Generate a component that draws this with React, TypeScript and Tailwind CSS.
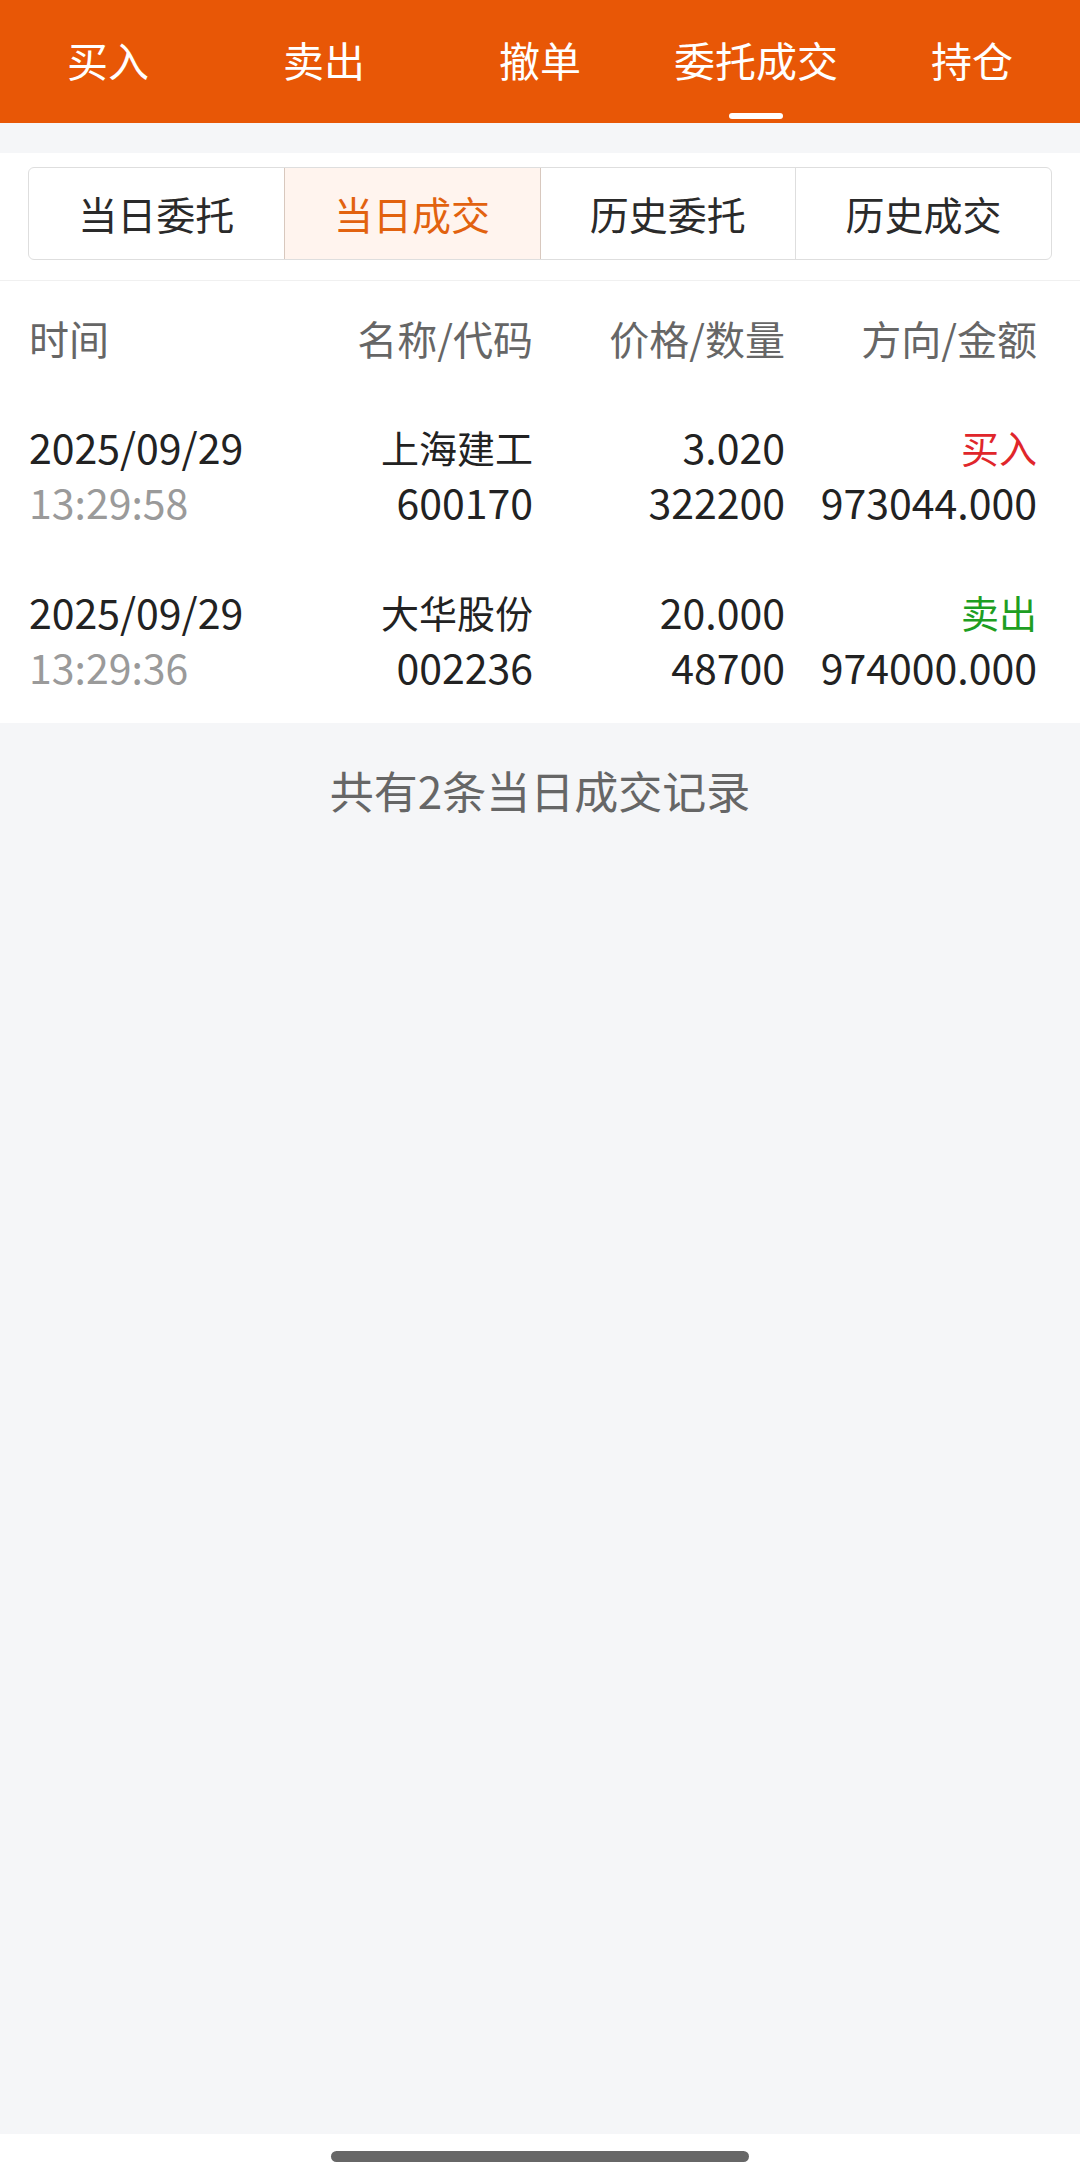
import React from "react";

const font = { fontFamily: '"Noto Sans CJK SC", "Noto Sans", sans-serif' };

const topTabs = ["买入", "卖出", "撤单", "委托成交", "持仓"];
const subTabs = ["当日委托", "当日成交", "历史委托", "历史成交"];

const rows = [
  { date: "2025/09/29", time: "13:29:58", name: "上海建工", code: "600170", price: "3.020", qty: "322200", dir: "买入", amt: "973044.000", buy: true },
  { date: "2025/09/29", time: "13:29:36", name: "大华股份", code: "002236", price: "20.000", qty: "48700", dir: "卖出", amt: "974000.000", buy: false },
];

export default function App() {
  return (
    <div className="w-[1080px] h-[2179px] flex flex-col bg-[#f5f6f8]" style={font}>
      {/* top nav */}
      <div className="h-[123px] bg-[#e85706] flex shrink-0">
        {topTabs.map((t, i) => (
          <div key={t} className="flex-1 relative flex items-center justify-center pb-[4px]">
            <span className="text-white text-[41px] leading-none">{t}</span>
            {i === 3 && (
              <div className="absolute left-1/2 -translate-x-1/2 top-[113px] w-[54px] h-[6px] rounded-full bg-white" />
            )}
          </div>
        ))}
      </div>
      <div className="h-[30px] shrink-0 bg-[#f5f6f8]" />
      {/* sub tabs */}
      <div className="bg-white pt-[14px] pb-[20px] px-[28px] shrink-0 border-b border-[#f0f0f0]">
        <div className="h-[93px] flex border border-[#dedede] rounded-[6px] overflow-hidden">
          {subTabs.map((t, i) => (
            <div
              key={t}
              className={
                i === 1
                  ? "flex-1 flex items-center justify-center bg-[#fff4ee] text-[#e2620f] border-l border-r border-[#d8c8be] text-[39px]"
                  : i === 3
                  ? "flex-1 flex items-center justify-center text-[#2a2a2a] text-[39px] border-l border-[#dedede]"
                  : "flex-1 flex items-center justify-center text-[#2a2a2a] text-[39px]"
              }
            >
              {t}
            </div>
          ))}
        </div>
      </div>
      {/* list */}
      <div className="bg-white pl-[29px] pr-[43px] shrink-0">
        <div className="grid grid-cols-4 h-[112px] items-center text-[40px] text-[#666666] pt-[2px]">
          <div className="text-left">时间</div>
          <div className="text-right">名称/代码</div>
          <div className="text-right">价格/数量</div>
          <div className="text-right">方向/金额</div>
        </div>
        {rows.map((r) => (
          <div key={r.code} className="grid grid-cols-4 h-[165px] pt-[26px] text-[41px] leading-[55px] text-[#222222]">
            <div className="flex flex-col items-start">
              <span>{r.date}</span>
              <span className="text-[#9a9a9a]">{r.time}</span>
            </div>
            <div className="flex flex-col items-end">
              <span className="text-[38px]">{r.name}</span>
              <span>{r.code}</span>
            </div>
            <div className="flex flex-col items-end">
              <span>{r.price}</span>
              <span>{r.qty}</span>
            </div>
            <div className="flex flex-col items-end">
              <span className={r.buy ? "text-[#e0262b] text-[38px]" : "text-[#1e9e22] text-[38px]"}>{r.dir}</span>
              <span>{r.amt}</span>
            </div>
          </div>
        ))}
      </div>
      {/* footer */}
      <div className="flex-1 flex flex-col">
        <div className="h-[134px] flex items-center justify-center text-[44px] text-[#666666]">
          共有2条当日成交记录
        </div>
      </div>
      <div className="h-[45px] bg-white shrink-0 flex items-center justify-center">
        <div className="w-[418px] h-[11px] rounded-full bg-[#676767]" />
      </div>
    </div>
  );
}
